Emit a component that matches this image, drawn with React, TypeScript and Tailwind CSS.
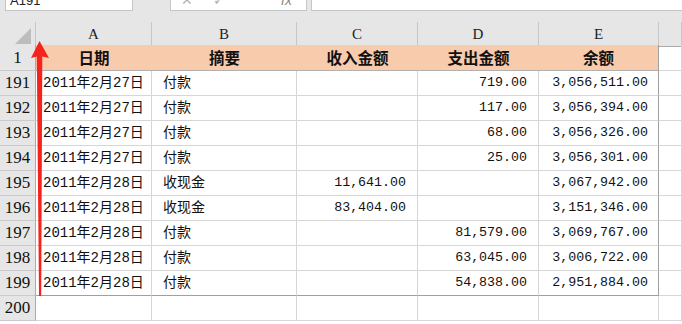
import React from 'react';

const cols = 'grid grid-cols-[36px_116px_145px_121px_121px_120px_1fr]';
const dataFont = "font-['Liberation_Mono','Noto_Sans_CJK_SC',monospace]";

type Row = { n: number; date: string; memo: string; inc: string; out: string; bal: string };

const rows: Row[] = [
  { n: 191, date: '2011年2月27日', memo: '付款', inc: '', out: '719.00', bal: '3,056,511.00' },
  { n: 192, date: '2011年2月27日', memo: '付款', inc: '', out: '117.00', bal: '3,056,394.00' },
  { n: 193, date: '2011年2月27日', memo: '付款', inc: '', out: '68.00', bal: '3,056,326.00' },
  { n: 194, date: '2011年2月27日', memo: '付款', inc: '', out: '25.00', bal: '3,056,301.00' },
  { n: 195, date: '2011年2月28日', memo: '收现金', inc: '11,641.00', out: '', bal: '3,067,942.00' },
  { n: 196, date: '2011年2月28日', memo: '收现金', inc: '83,404.00', out: '', bal: '3,151,346.00' },
  { n: 197, date: '2011年2月28日', memo: '付款', inc: '', out: '81,579.00', bal: '3,069,767.00' },
  { n: 198, date: '2011年2月28日', memo: '付款', inc: '', out: '63,045.00', bal: '3,006,722.00' },
  { n: 199, date: '2011年2月28日', memo: '付款', inc: '', out: '54,838.00', bal: '2,951,884.00' },
];

const RowHead = ({ label, h }: { label: string; h: string }) => (
  <div className={`${h} flex items-center justify-center bg-[#e6e6e6] border-r border-b border-r-[#ababab] border-b-[#cacaca] font-['Liberation_Serif',serif] text-[17px] text-[#111]`}>
    {label}
  </div>
);

const App: React.FC = () => {
  return (
    <div className="relative w-[682px] h-[324px] overflow-hidden bg-white">
      {/* formula bar strip */}
      <div className="h-[22px] bg-[#e6e6e6] flex items-start">
        <div className="ml-[5px] w-[128px] h-[11px] bg-white border border-t-0 border-[#c6c6c6] overflow-hidden">
          <div className="-mt-[9px] ml-[4px] font-['Liberation_Sans',sans-serif] text-[13px] text-[#222]">A191</div>
        </div>
        <div className="ml-[37px] w-[137px] h-[11px] bg-white border border-t-0 border-[#c6c6c6] overflow-hidden">
          <div className="-mt-[10px] ml-[10px] flex gap-[20px] font-['Liberation_Sans',sans-serif] text-[14px] text-[#b0b0b0]">
            <span>✕</span>
            <span>✓</span>
            <span className="ml-[36px] italic text-[#888]">fx</span>
          </div>
        </div>
        <div className="ml-[4px] flex-1 h-[11px] bg-white border border-t-0 border-r-0 border-[#c6c6c6]" />
      </div>

      {/* column letters */}
      <div className={`${cols} h-[23px]`}>
        <div className="bg-[#e6e6e6] border-r border-b border-r-[#c6c6c6] border-b-[#ababab] flex items-end justify-end pr-[3px] pb-[2px]">
          <svg width="17" height="16" viewBox="0 0 17 16">
            <polygon points="16,0 16,16 0,16" fill="#bdbdbd" />
          </svg>
        </div>
        {['A', 'B', 'C', 'D', 'E', ''].map((c, i) => (
          <div
            key={i}
            className="bg-[#e6e6e6] border-r border-b border-r-[#c6c6c6] border-b-[#ababab] flex items-center justify-center pt-[1px] font-['Liberation_Serif',serif] text-[15px] text-[#222]"
          >
            {c}
          </div>
        ))}
      </div>

      {/* header row 1 */}
      <div className={`${cols} h-[26px]`}>
        <RowHead label="1" h="h-[26px]" />
        {['日期', '摘要', '收入金额', '支出金额', '余额'].map((t, i) => (
          <div
            key={t}
            className={`bg-[#f8cbad] border-b border-b-[#b0b0b0] flex items-center justify-center font-['Noto_Sans_CJK_SC',sans-serif] font-bold text-[15.5px] text-[#111] ${i === 4 ? 'border-r border-r-[#a0a0a0]' : ''}`}
          >
            {t}
          </div>
        ))}
        <div className="border-r border-b border-[#d6d6d6]" />
      </div>

      {/* data rows */}
      {rows.map((r, idx) => {
        const last = idx === rows.length - 1;
        const bb = last ? 'border-b-[#a0a0a0]' : 'border-b-[#d6d6d6]';
        const cell = `border-r border-b border-r-[#d6d6d6] ${bb} flex items-center ${dataFont} text-[#111]`;
        return (
          <div key={r.n} className={`${cols} h-[25px]`}>
            <RowHead label={String(r.n)} h="h-[25px]" />
            <div className={`${cell} pl-[7px] text-[14px]`}>{r.date}</div>
            <div className={`${cell} pl-[11px] text-[14px]`}>{r.memo}</div>
            <div className={`${cell} justify-end pr-[11px] text-[13.3px]`}>{r.inc}</div>
            <div className={`${cell} justify-end pr-[11px] text-[13.3px]`}>{r.out}</div>
            <div className={`border-r border-b border-r-[#a0a0a0] ${bb} flex items-center justify-end pr-[10px] ${dataFont} text-[13.3px] text-[#111]`}>
              {r.bal}
            </div>
            <div className="border-r border-b border-[#d6d6d6]" />
          </div>
        );
      })}

      {/* row 200 */}
      <div className={`${cols} h-[25px]`}>
        <RowHead label="200" h="h-[25px]" />
        {[0, 1, 2, 3, 4, 5].map((i) => (
          <div key={i} className="border-r border-b border-[#d6d6d6]" />
        ))}
      </div>

      {/* red arrow annotation */}
      <svg className="absolute left-0 top-0 pointer-events-none" width="682" height="324" viewBox="0 0 682 324">
        <polygon
          points="39.5,41 49,58 42.3,56.5 41.2,296 39,296 36.8,56.5 31,58"
          fill="#f5231b"
        />
      </svg>
    </div>
  );
};

export default App;
